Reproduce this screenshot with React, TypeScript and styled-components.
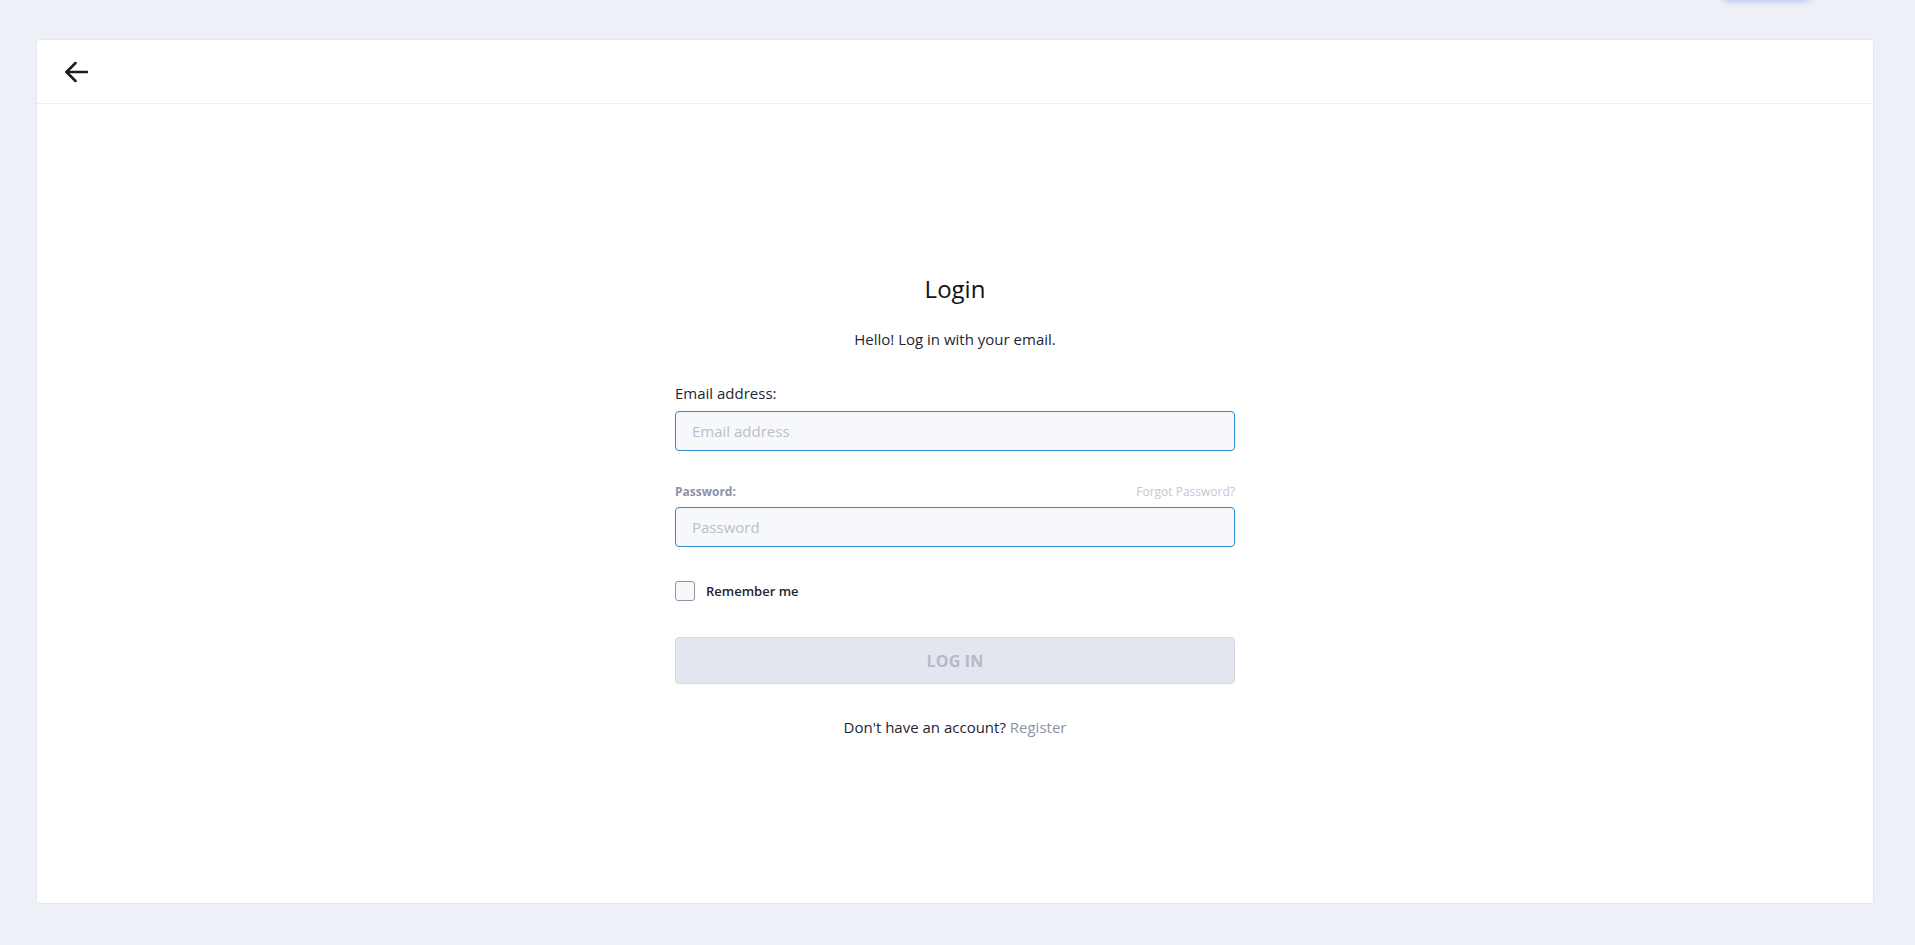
import styled, { createGlobalStyle } from 'styled-components';

const GlobalStyle = createGlobalStyle`
  html, body {
    margin: 0;
    padding: 0;
    background: #edf0f7;
    font-family: "Open Sans", "Noto Sans", Arial, sans-serif;
    overflow: hidden;
  }
  * { box-sizing: border-box; }
`;

// Page wrapper holding the card
const Page = styled.div`
  position: relative;
  height: 945px;
  padding: 39px 41px 41px 36px;
`;

// blurred glow of some element sitting just above the viewport
const TopGlow = styled.div`
  position: absolute;
  top: -30px;
  left: 1718px;
  width: 98px;
  height: 30px;
  border-radius: 14px;
  background: #edf0f7;
  box-shadow: 0 1px 6px rgba(100, 120, 240, 0.45);
`;

const Card = styled.div`
  height: 100%;
  background: #ffffff;
  border: 1px solid #e4e7ee;
  border-radius: 4px;
  display: flex;
  flex-direction: column;
`;

const CardHeader = styled.div`
  height: 64px;
  flex-shrink: 0;
  display: flex;
  align-items: center;
  padding-left: 27px;
  border-bottom: 1px solid #eceef2;
`;

const BackButton = styled.button`
  border: none;
  background: none;
  padding: 0;
  width: 26px;
  height: 26px;
  display: flex;
  align-items: center;
  justify-content: center;
  cursor: pointer;
  color: #1b1d22;
`;

const CardBody = styled.div`
  flex: 1;
  display: flex;
  justify-content: center;
  padding-top: 169px;
`;

const Form = styled.form`
  width: 560px;
  display: flex;
  flex-direction: column;
`;

const Title = styled.h1`
  margin: 0;
  font-size: 24px;
  line-height: 32px;
  font-weight: 400;
  color: #111318;
  text-align: center;
`;

const Subtitle = styled.p`
  margin: 23px 0 0;
  font-size: 15px;
  line-height: 22px;
  color: #1f2533;
  text-align: center;
`;

const FieldLabel = styled.label`
  display: block;
  margin-top: 33px;
  font-size: 15px;
  line-height: 20px;
  color: #1f2533;
`;

const LabelRow = styled.div`
  margin-top: 32px;
  display: flex;
  justify-content: space-between;
  align-items: center;
  height: 16px;
`;

const SmallLabel = styled.label`
  font-size: 12px;
  font-weight: 700;
  color: #8b93a5;
`;

const ForgotLink = styled.a`
  font-size: 12px;
  color: #c3c8d1;
  text-decoration: none;
`;

const Input = styled.input`
  margin-top: 8px;
  width: 100%;
  height: 40px;
  padding: 0 16px;
  font-family: inherit;
  font-size: 15px;
  color: #1f2533;
  background: #f6f8fb;
  border: 1px solid #2e8fc4;
  border-radius: 4px;
  outline: none;

  &::placeholder {
    color: #b9bfca;
  }
`;

const CheckRow = styled.label`
  margin-top: 34px;
  display: flex;
  align-items: center;
  gap: 11px;
  font-size: 13px;
  font-weight: 600;
  color: #1f2533;
  cursor: pointer;
`;

const CheckBox = styled.input`
  appearance: none;
  margin: 0;
  width: 20px;
  height: 20px;
  border: 1px solid #8e95a2;
  border-radius: 3px;
  background: #f6f8fb;
`;

const SubmitButton = styled.button`
  margin-top: 36px;
  width: 100%;
  height: 47px;
  background: #e3e6ee;
  border: 1px solid #d5d9e1;
  border-radius: 4px;
  font-family: inherit;
  font-size: 16px;
  font-weight: 700;
  color: #b4bac6;
  letter-spacing: 0.2px;
`;

const Footer = styled.p`
  margin: 33px 0 0;
  font-size: 15px;
  line-height: 20px;
  color: #1f2533;
  text-align: center;
`;

const RegisterLink = styled.a`
  color: #8b93a5;
  text-decoration: none;
`;

function BackArrow() {
  return (
    <svg width="24" height="22" viewBox="0 0 24 22" fill="none">
      <path d="M1.5 11H22" stroke="currentColor" strokeWidth="2.5" strokeLinecap="round" />
      <path d="M10.5 2L1.5 11L10.5 20" stroke="currentColor" strokeWidth="2.5" strokeLinecap="round" strokeLinejoin="round" />
    </svg>
  );
}

export default function App() {
  return (
    <>
      <GlobalStyle />
      <Page>
        <TopGlow />
        <Card>
          <CardHeader>
            <BackButton aria-label="Back">
              <BackArrow />
            </BackButton>
          </CardHeader>
          <CardBody>
            <Form onSubmit={(e) => e.preventDefault()}>
              <Title>Login</Title>
              <Subtitle>Hello! Log in with your email.</Subtitle>

              <FieldLabel htmlFor="email">Email address:</FieldLabel>
              <Input id="email" type="email" placeholder="Email address" />

              <LabelRow>
                <SmallLabel htmlFor="password">Password:</SmallLabel>
                <ForgotLink href="#">Forgot Password?</ForgotLink>
              </LabelRow>
              <Input id="password" type="password" placeholder="Password" />

              <CheckRow>
                <CheckBox type="checkbox" />
                Remember me
              </CheckRow>

              <SubmitButton type="submit" disabled>LOG IN</SubmitButton>

              <Footer>
                Don't have an account? <RegisterLink href="#">Register</RegisterLink>
              </Footer>
            </Form>
          </CardBody>
        </Card>
      </Page>
    </>
  );
}
